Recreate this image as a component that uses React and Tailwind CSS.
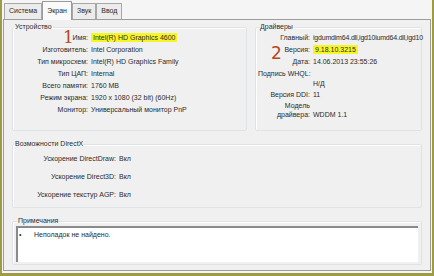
import React from 'react'

function Row({ label, value, w, mark, tight }) {
  return (
    <div className="flex h-3 items-center">
      <div className="shrink-0 text-right" style={{ width: w }}>{label}</div>
      <div className={'ml-[3px] whitespace-nowrap' + (tight ? ' tracking-[-0.2px]' : '')}>
        {mark ? <span className="bg-[#f6f626] px-[2px] py-[1px]">{value}</span> : value}
      </div>
    </div>
  )
}

function Group({ title, className, children }) {
  return (
    <fieldset className={'rounded-[2px] border border-[#dde3e7] shadow-[inset_1px_1px_0_#fff] ' + className}>
      <legend className="ml-[1px] px-[1px] leading-[8px]">{title}</legend>
      {children}
    </fieldset>
  )
}

export default function App() {
  const tabs = ['Система', 'Экран', 'Звук', 'Ввод']

  return (
    <div className="flex h-[276px] w-[434px] flex-col border-b-[3px] border-l-2 border-r-2 border-[#9d9c45] bg-[#f5f5f5] px-px font-['Liberation_Sans',Arial,sans-serif] text-[7px] text-[#2b2b2b]">
      <div className="flex h-[19px] items-end pl-px pt-[2px]">
        {tabs.map(t => (
          t === 'Экран'
            ? <div key={t} className="relative z-10 -mb-px flex h-[19px] items-center border border-b-0 border-[#9a9a9a] bg-[#fafafa] px-[4px]">{t}</div>
            : <div key={t} className="flex h-[16px] items-center border border-b-0 border-[#a8a8a8] bg-[#ececec] px-[4px]">{t}</div>
        ))}
      </div>

      <div className="relative flex h-[252px] flex-col gap-[9px] border border-[#9d9d9d] bg-[#f0f0f0] px-[8px] pt-[3px]">
        <div className="flex gap-[8px]">
          <Group title="Устройство" className="h-[108px] w-[235px] shrink-0 pt-[1px]">
            <Row w={75} label="Имя:" value="Intel(R) HD Graphics 4600" mark />
            <Row w={75} label="Изготовитель:" value="Intel Corporation" />
            <Row w={75} label="Тип микросхем:" value="Intel(R) HD Graphics Family" />
            <Row w={75} label="Тип ЦАП:" value="Internal" />
            <Row w={75} label="Всего памяти:" value="1760 MB" />
            <Row w={75} label="Режим экрана:" value="1920 x 1080 (32 bit) (60Hz)" />
            <Row w={75} label="Монитор:" value="Универсальный монитор PnP" />
          </Group>

          <Group title="Драйверы" className="h-[108px] min-w-0 flex-1 pl-[2px] pt-[1px]">
            <Row w={52} label="Главный:" value="igdumdim64.dll,igd10iumd64.dll,igd10" tight />
            <Row w={52} label="Версия:" value="9.18.10.3215" mark />
            <Row w={52} label="Дата:" value="14.06.2013 23:55:26" />
            <div className="mt-[1px] h-[10px] leading-[10px]">Подпись WHQL:</div>
            <div className="h-[10px] pl-[55px] leading-[10px]">Н/Д</div>
            <Row w={52} label="Версия DDI:" value="11" />
            <div className="flex items-end">
              <div className="w-[52px] text-right leading-[9px]">Модель<br />драйвера:</div>
              <div className="ml-[3px] leading-[9px]">WDDM 1.1</div>
            </div>
          </Group>
        </div>

        <Group title="Возможности DirectX" className="h-[68px] pt-[5px]">
          <div className="flex flex-col gap-[6px]">
            <Row w={103} label="Ускорение DirectDraw:" value="Вкл" />
            <Row w={103} label="Ускорение Direct3D:" value="Вкл" />
            <Row w={103} label="Ускорение текстур AGP:" value="Вкл" />
          </div>
        </Group>

        <Group title="Примечания" className="h-[48px] px-[3px] pt-[1px]">
          <div className="flex h-[36px] border-l-2 border-t-2 border-[#8a8a8a] bg-white pl-[1px] pt-[2px]">
            <span className="w-[15px]">•</span>
            <span>Неполадок не найдено.</span>
          </div>
        </Group>

        <div className="absolute left-[59px] top-[9px] font-['DejaVu_Serif',serif] text-[17px] leading-none text-[#b5481f]">1</div>
        <div className="absolute left-[267px] top-[25px] font-['DejaVu_Sans',sans-serif] text-[17px] leading-none text-[#b5481f]">2</div>
      </div>
    </div>
  )
}
